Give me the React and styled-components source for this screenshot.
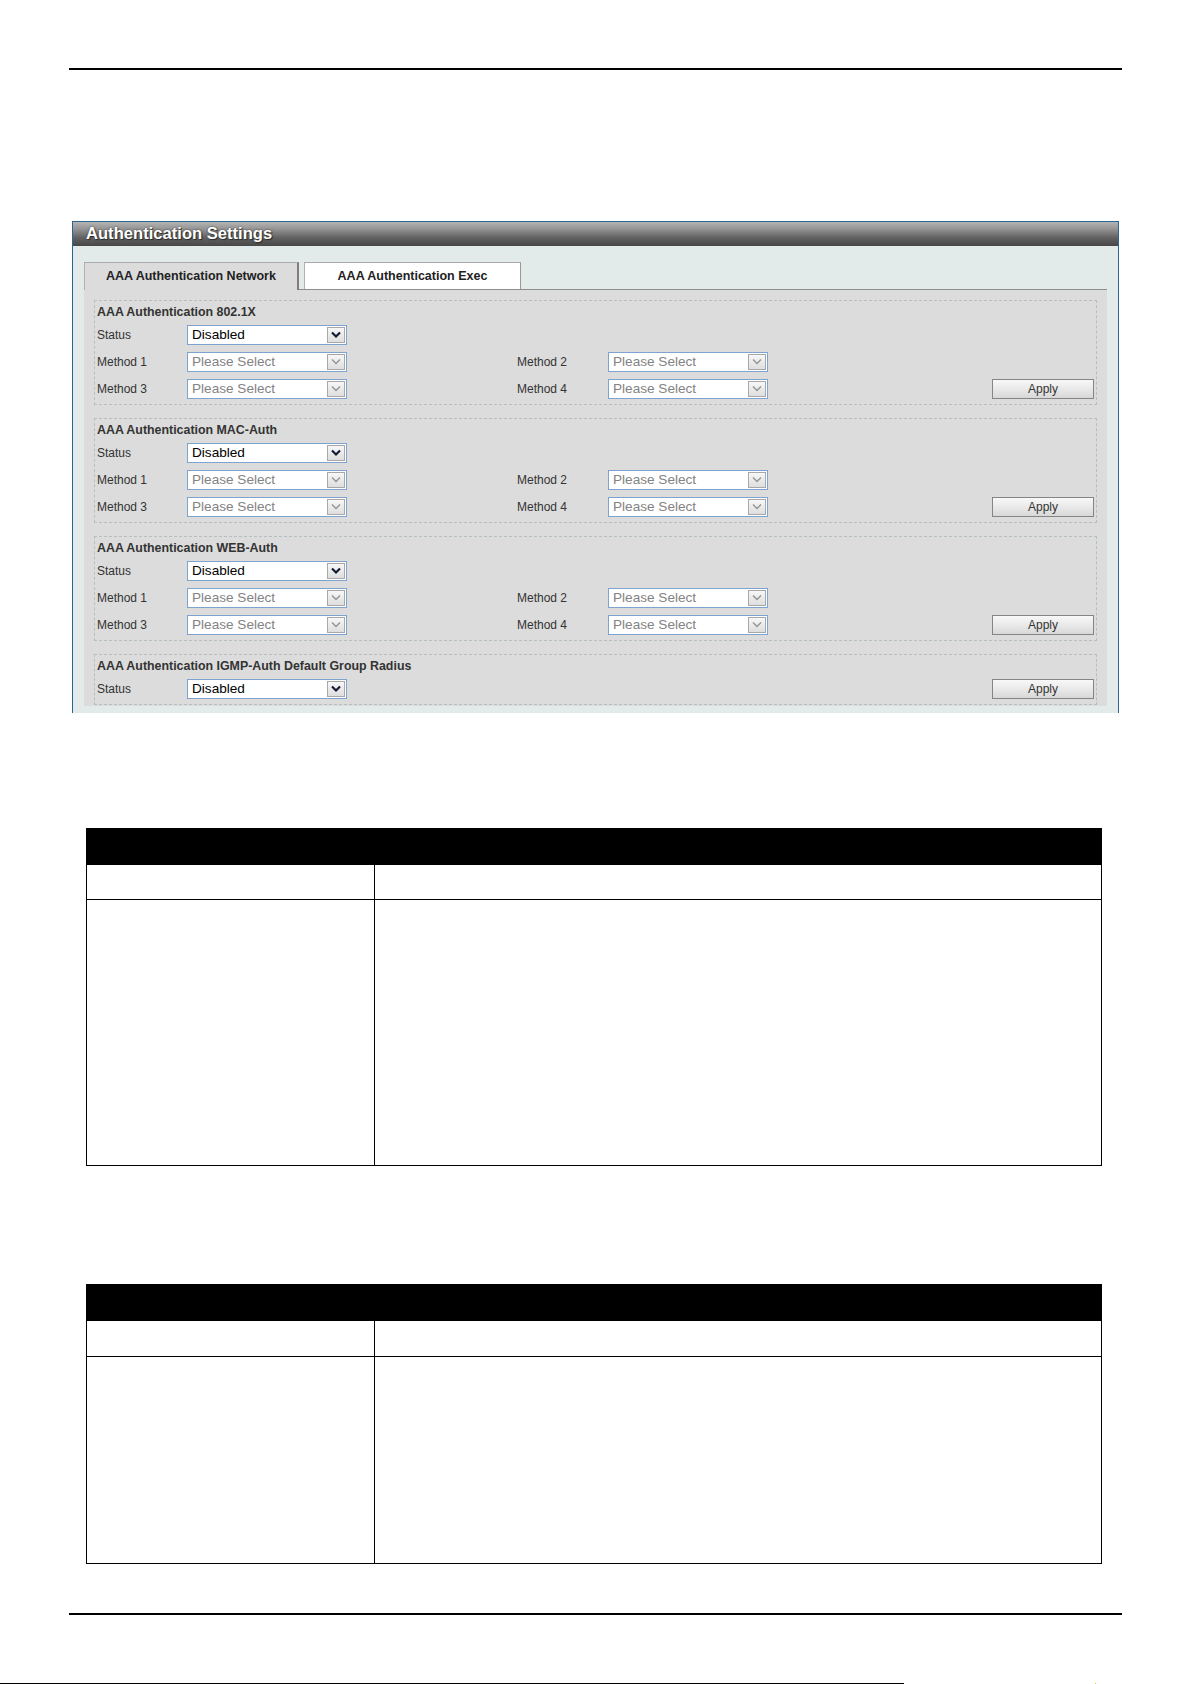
import React from "react";
import styled, { createGlobalStyle } from "styled-components";

const GlobalStyle = createGlobalStyle`
  html, body { margin: 0; padding: 0; background: #ffffff; }
  body { font-family: "Liberation Sans", Arial, Helvetica, sans-serif; }
  * { box-sizing: border-box; }
`;

const Page = styled.div`
  width: 1192px;
  height: 1684px;
  display: flex;
  flex-direction: column;
  overflow: hidden;
  background: #fff;
`;

const Rule = styled.div`
  flex: none;
  margin: ${(p) => p.$top}px 0 0 69px;
  width: 1053px;
  height: 2px;
  background: #000;
`;

/* ---------- settings panel ---------- */

const Panel = styled.section`
  flex: none;
  margin: 151px 0 0 72px;
  width: 1047px;
  height: 492px;
  border: 1px solid #2c6590;
  border-bottom: none;
  background: #e2eaea;
  display: flex;
  flex-direction: column;
`;

const TitleBar = styled.div`
  height: 24px;
  padding-left: 13px;
  background: linear-gradient(#b4b4b4 0%, #939393 30%, #626262 65%, #474747 100%);
  color: #fff;
  font-size: 16.6px;
  font-weight: bold;
  line-height: 23px;
  text-shadow: 1px 1px 1px #2a2a2a, 0 0 2px #3a3a3a;
`;

const PanelBody = styled.div`
  padding: 16px 11px 7px;
`;

const TabBar = styled.div`
  display: flex;
  align-items: flex-end;
  height: 28px;
  border-bottom: 1px solid #8e8e8e;
`;

const Tab = styled.div`
  width: ${(p) => p.$w}px;
  height: ${(p) => (p.$active ? 28 : 27)}px;
  margin-right: 5px;
  margin-bottom: ${(p) => (p.$active ? -1 : 0)}px;
  background: ${(p) => (p.$active ? "#dcdcdc" : "#ffffff")};
  border-top: 1px solid #a9a9a9;
  border-left: 1px solid #b0b0b0;
  border-right: ${(p) => (p.$active ? "2px solid #7d7d7d" : "1px solid #9a9a9a")};
  display: flex;
  align-items: center;
  justify-content: center;
  padding-bottom: ${(p) => (p.$active ? 1 : 0)}px;
  font-size: 12.5px;
  font-weight: bold;
  color: #222;
`;

const Content = styled.div`
  background: #dcdcdc;
  padding: 10px 10px 1px;
  display: flex;
  flex-direction: column;
  gap: 13px;
`;

const Group = styled.div`
  border: 1px dashed #b5bfbf;
  padding: 0 2px 5px;
`;

const GroupTitle = styled.div`
  height: 22px;
  line-height: 23px;
  font-size: 12.4px;
  font-weight: bold;
  color: #333;
`;

const FieldGrid = styled.div`
  margin-top: 2px;
  display: grid;
  grid-template-columns: 90px 160px 170px 91px 160px 224px 102px;
  grid-auto-rows: 20px;
  row-gap: 7px;
  align-items: center;
`;

const FieldLabel = styled.div`
  grid-column: ${(p) => p.$col};
  font-size: 12px;
  color: #333;
  line-height: 20px;
`;

const SelectBox = styled.div`
  grid-column: ${(p) => p.$col};
  height: 20px;
  display: flex;
  align-items: center;
  border: 1px solid #7fa3d1;
  background: #fff;
  padding-left: 4px;
`;

const SelectText = styled.span`
  flex: 1;
  font-size: 13.6px;
  line-height: 18px;
  color: ${(p) => (p.$muted ? "#838383" : "#000")};
  white-space: nowrap;
`;

const ArrowBox = styled.span`
  flex: none;
  width: 18px;
  height: 16px;
  margin-right: 1px;
  border: 1px solid #a8a8a8;
  background: linear-gradient(#f7f7f7, #dedede);
  display: flex;
  align-items: center;
  justify-content: center;
`;

const ApplyButton = styled.button`
  grid-column: 7;
  width: 102px;
  height: 20px;
  padding: 0;
  border: 1px solid #858585;
  border-radius: 0;
  background: linear-gradient(#f8f8f8 0%, #e9e9e9 50%, #d8d8d8 100%);
  font-family: "Liberation Sans", Arial, sans-serif;
  font-size: 12px;
  color: #333;
  line-height: 18px;
  cursor: pointer;
`;

const Chevron = ({ muted }) => (
  <svg width="12" height="8" viewBox="0 0 12 8">
    <polyline
      points="2,1.5 6,5.5 10,1.5"
      fill="none"
      stroke={muted ? "#949494" : "#141c33"}
      strokeWidth={muted ? 1.4 : 2.2}
    />
  </svg>
);

const Select = ({ col, value, muted }) => (
  <SelectBox $col={col}>
    <SelectText $muted={muted}>{value}</SelectText>
    <ArrowBox>
      <Chevron muted={muted} />
    </ArrowBox>
  </SelectBox>
);

const MethodGroup = ({ title }) => (
  <Group>
    <GroupTitle>{title}</GroupTitle>
    <FieldGrid>
      <FieldLabel $col={1}>Status</FieldLabel>
      <Select col={2} value="Disabled" />

      <FieldLabel $col={1}>Method 1</FieldLabel>
      <Select col={2} value="Please Select" muted />
      <FieldLabel $col={4}>Method 2</FieldLabel>
      <Select col={5} value="Please Select" muted />

      <FieldLabel $col={1}>Method 3</FieldLabel>
      <Select col={2} value="Please Select" muted />
      <FieldLabel $col={4}>Method 4</FieldLabel>
      <Select col={5} value="Please Select" muted />
      <ApplyButton>Apply</ApplyButton>
    </FieldGrid>
  </Group>
);

/* ---------- description tables ---------- */

const DocTable = styled.div`
  flex: none;
  margin: ${(p) => p.$top}px 0 0 86px;
  width: 1016px;
  border: 1px solid #000;
  border-top: none;
`;

const HeadRow = styled.div`
  height: 37px;
  background: #000;
`;

const BodyRow = styled.div`
  display: grid;
  grid-template-columns: 287px 1fr;
  height: ${(p) => p.$h}px;
  border-top: ${(p) => (p.$ruled ? "1px solid #000" : "none")};
`;

const Cell = styled.div`
  & + & {
    border-left: 1px solid #000;
  }
`;

const Footer = styled.div`
  flex: none;
  margin-top: 68px;
  height: 1px;
  display: flex;
  align-items: stretch;
`;

const FooterLine = styled.div`
  width: 904px;
  background: #000;
`;

const FooterMark = styled.div`
  margin-left: 191px;
  width: 1px;
  background: #d8c24a;
`;

export default function App() {
  return (
    <>
      <GlobalStyle />
      <Page>
        <Rule $top={68} />

        <Panel>
          <TitleBar>Authentication Settings</TitleBar>
          <PanelBody>
            <TabBar>
              <Tab $active $w={215}>AAA Authentication Network</Tab>
              <Tab $w={217}>AAA Authentication Exec</Tab>
            </TabBar>
            <Content>
              <MethodGroup title="AAA Authentication 802.1X" />
              <MethodGroup title="AAA Authentication MAC-Auth" />
              <MethodGroup title="AAA Authentication WEB-Auth" />
              <Group>
                <GroupTitle>AAA Authentication IGMP-Auth Default Group Radius</GroupTitle>
                <FieldGrid>
                  <FieldLabel $col={1}>Status</FieldLabel>
                  <Select col={2} value="Disabled" />
                  <ApplyButton>Apply</ApplyButton>
                </FieldGrid>
              </Group>
            </Content>
          </PanelBody>
        </Panel>

        <DocTable $top={115}>
          <HeadRow />
          <BodyRow $h={34}>
            <Cell />
            <Cell />
          </BodyRow>
          <BodyRow $h={266} $ruled>
            <Cell />
            <Cell />
          </BodyRow>
        </DocTable>

        <DocTable $top={118}>
          <HeadRow />
          <BodyRow $h={35}>
            <Cell />
            <Cell />
          </BodyRow>
          <BodyRow $h={207} $ruled>
            <Cell />
            <Cell />
          </BodyRow>
        </DocTable>

        <Rule $top={49} />

        <Footer>
          <FooterLine />
          <FooterMark />
        </Footer>
      </Page>
    </>
  );
}
